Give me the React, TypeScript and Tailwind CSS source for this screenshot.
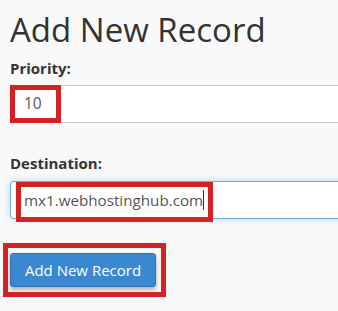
import React from "react";

export default function App() {
  return (
    <div
      className="w-[338px] h-[311px] bg-[#f9f9f9] pl-[10px] overflow-hidden text-[#333]"
      style={{ fontFamily: '"Open Sans", "Liberation Sans", sans-serif' }}
    >
      <h1 className="pt-[10px] text-[33px] leading-[40px] font-normal">Add New Record</h1>
      <label className="block mt-[8px] text-[15px] leading-[20px] font-bold">Priority:</label>
      <div className="relative mt-[7px]">
        <div className="h-[38px] w-[400px] border-y border-[#ccc] bg-white pl-[14px] flex items-center text-[15.5px] text-[#555]">
          10
        </div>
        <div className="absolute left-0 top-0 w-[51px] h-[38px] border-[5px] border-[#d42121]" />
      </div>
      <label className="block mt-[30px] text-[15px] leading-[20px] font-bold">Destination:</label>
      <div className="relative mt-[8px]">
        <div className="h-[38px] w-[400px] border border-[#66afe9] rounded-[4px] bg-white pl-[13px] flex items-center text-[15.2px] text-[#555] shadow-[0_0_6px_rgba(102,175,233,0.5)]">
          <span>mx1.webhostinghub.com</span>
          <span className="w-px h-[20px] bg-[#333]" />
        </div>
        <div className="absolute left-[6px] top-[1px] w-[197px] h-[40px] border-[5px] border-[#d42121]" />
      </div>
      <div className="relative mt-[34px] w-fit">
        <button className="h-[34px] w-[146px] rounded-[3px] bg-[#3a89d0] border border-[#2f74b8] text-white text-[15px] shadow-[0_3px_5px_rgba(0,0,0,0.3)]">
          Add New Record
        </button>
        <div className="absolute left-[-7px] top-[-10px] w-[163px] h-[54px] border-[5px] border-[#d42121]" />
      </div>
    </div>
  );
}
